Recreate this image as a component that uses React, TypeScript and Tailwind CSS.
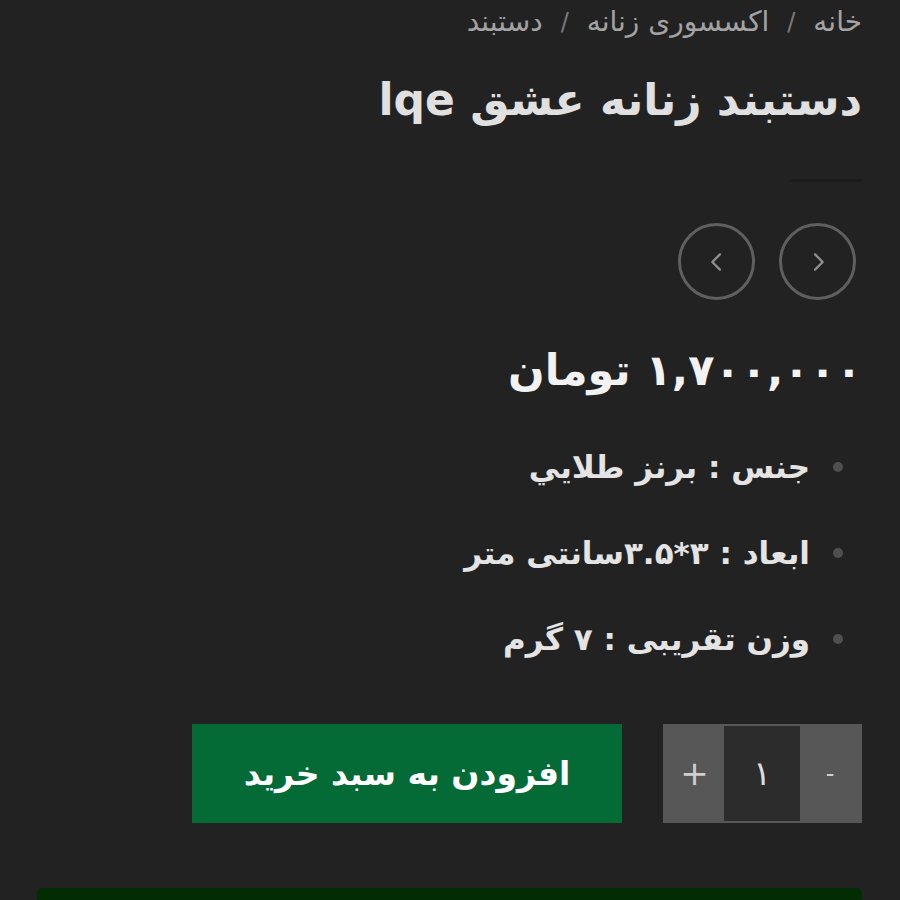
import React, { useState } from 'react';

const crumbs = ['خانه', 'اکسسوری زنانه', 'دستبند'];

const specs = ['جنس : برنز طلايي', 'ابعاد : ۳*۳.۵سانتی متر', 'وزن تقریبی : ۷ گرم'];

export default function App() {
  const [qty, setQty] = useState(1);

  const toFa = (n: number) => String(n).replace(/\d/g, (d) => '۰۱۲۳۴۵۶۷۸۹'[Number(d)]);

  return (
    <div
      dir="rtl"
      className="w-[900px] h-[900px] overflow-hidden bg-[#222222] text-[#e2e2e2]"
      style={{ fontFamily: '"DejaVu Sans", "Noto Sans", sans-serif' }}
    >
      <div className="pr-[38px] pl-[37px]">
        {/* Breadcrumb */}
        <nav className="flex items-center gap-[16px] h-[44px] text-[28px] text-[#a3a3a3]">
          {crumbs.map((c, i) => (
            <React.Fragment key={c}>
              {i > 0 && <span className="text-[#7a7a7a] text-[24px] px-[2px]">/</span>}
              <span>{c}</span>
            </React.Fragment>
          ))}
        </nav>

        {/* Title */}
        <h1 className="mt-[28px] text-[44px] font-bold leading-[56px] text-[#e0e0e0]">دستبند زنانه عشق lqe</h1>

        {/* Divider */}
        <div className="mt-[51px] h-[3px] w-[72px] bg-[#1c1c1c]" />

        {/* Slider arrows */}
        <div className="mt-[41px] flex gap-[24px] pr-[6px]">
          <button className="w-[77px] h-[77px] rounded-full border-[3px] border-[#5f5f5f] flex items-center justify-center">
            <svg width="28" height="28" viewBox="0 0 24 24" fill="none" stroke="#8f8f8f" strokeWidth="2" strokeLinecap="round" strokeLinejoin="round">
              <path d="M9.5 5.5l6.5 6.5-6.5 6.5" />
            </svg>
          </button>
          <button className="w-[77px] h-[77px] rounded-full border-[3px] border-[#5f5f5f] flex items-center justify-center">
            <svg width="28" height="28" viewBox="0 0 24 24" fill="none" stroke="#8f8f8f" strokeWidth="2" strokeLinecap="round" strokeLinejoin="round">
              <path d="M14.5 5.5l-6.5 6.5 6.5 6.5" />
            </svg>
          </button>
        </div>

        {/* Price */}
        <div className="mt-[40px] text-[43px] font-bold leading-[60px] text-[#f2f2f2]">۱,۷۰۰,۰۰۰ تومان</div>

        {/* Specs */}
        <ul className="mt-[44px] mr-[19px] flex flex-col gap-[40px]">
          {specs.map((s) => (
            <li key={s} className="flex items-center gap-[23px] text-[31px] font-bold leading-[46px] text-[#e4e4e4]">
              <span className="w-[10px] h-[10px] rounded-full bg-[#4f4f4f] shrink-0" />
              <span>{s}</span>
            </li>
          ))}
        </ul>

        {/* Cart */}
        <div className="mt-[62px] flex gap-[41px]">
          <div className="flex h-[99px] w-[199px] bg-[#575757] p-[2px]">
            <button onClick={() => setQty((q) => Math.max(1, q - 1))} className="w-[60px] flex items-center justify-center text-[24px] text-[#cfcfcf]">
              -
            </button>
            <div className="w-[76px] bg-[#2c2c2c] flex items-center justify-center text-[34px] text-[#dcdcdc]">{toFa(qty)}</div>
            <button onClick={() => setQty((q) => q + 1)} className="flex-1 flex items-center justify-center text-[34px] text-[#cfcfcf]">
              +
            </button>
          </div>
          <button className="h-[99px] w-[430px] bg-[#046b36] text-white text-[33px] font-bold flex items-center justify-center">
            افزودن به سبد خرید
          </button>
        </div>

        {/* Bottom bar */}
        <div className="mt-[65px] h-[30px] rounded-[6px] bg-[#022d02]" />
      </div>
    </div>
  );
}
